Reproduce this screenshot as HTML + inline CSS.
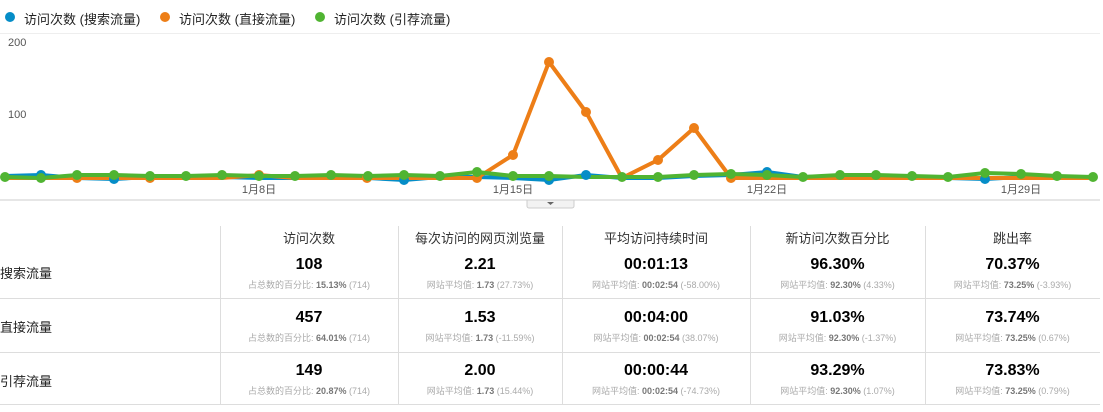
<!DOCTYPE html><html><head><meta charset="utf-8"><style>
body{margin:0;width:1103px;height:412px;background:#fff;font-family:"Liberation Sans","Noto Sans CJK SC",sans-serif;position:relative;overflow:hidden}
.a{position:absolute;white-space:nowrap}
.leg{top:9px;font-size:13px;color:#222}
.dot{position:absolute;width:10px;height:10px;border-radius:5px;top:12px}
.vl{position:absolute;top:226px;width:1px;height:178px;background:#ddd}
.hl{position:absolute;left:0;height:1px;background:#ddd;width:1100px}
.c{position:absolute;text-align:center}
.h{font-size:13px;color:#333;top:228px}
.v{font-size:16px;font-weight:bold;color:#000}
.s{font-size:9px;color:#aaa}
.s b{color:#777}
.rl{position:absolute;left:0;font-size:13px;color:#222}
</style></head><body>
<div class="dot" style="left:5px;background:#058dc7"></div><div class="a leg" style="left:24px">访问次数 (搜索流量)</div>
<div class="dot" style="left:160px;background:#ed7e17"></div><div class="a leg" style="left:179px">访问次数 (直接流量)</div>
<div class="dot" style="left:315px;background:#50b432"></div><div class="a leg" style="left:334px">访问次数 (引荐流量)</div>
<div style="position:absolute;left:0;top:33px;width:1100px;height:1px;background:#eee"></div>
<div class="a" style="left:8px;top:37px;font-size:11px;color:#555">200</div>
<div class="a" style="left:8px;top:109px;font-size:11px;color:#555">100</div>
<svg style="position:absolute;left:0;top:0" width="1103" height="215">
<line x1="0" y1="200" x2="1100" y2="200" stroke="#ccc"/>
<path d="M527 200h47v6a2 2 0 0 1-2 2h-43a2 2 0 0 1-2-2z" fill="#f2f2f2" stroke="#ccc"/>
<path d="M547 202h7l-3.5 3z" fill="#666"/>
<g font-size="11" fill="#555" text-anchor="middle" font-family="Liberation Sans,Noto Sans CJK SC,sans-serif">
<text x="259" y="193">1月8日</text><text x="513" y="193">1月15日</text><text x="767" y="193">1月22日</text><text x="1021" y="193">1月29日</text></g>
<g id="b" fill="none" stroke-width="4" stroke-linejoin="round">
<polyline stroke="#058dc7" points="5,176 41,175 77,178 114,179 150,177 186,178 222,177 259,178 295,178 331,178 368,178 404,180 440,177 477,177 513,178 549,180 586,175 622,178 658,178 694,176 731,175 767,172 803,177 840,176 876,177 912,178 948,178 985,179 1021,177 1057,178 1093,178"/>
<polyline stroke="#ed7e17" points="5,178 41,178 77,178 114,178 150,178 186,178 222,178 259,175 295,178 331,178 368,178 404,178 440,178 477,178 513,155 549,62 586,112 622,178 658,160 694,128 731,178 767,178 803,178 840,178 876,178 912,178 948,178 985,178 1021,178 1057,178 1093,178"/>
<polyline stroke="#50b432" points="5,177 41,178 77,175 114,175 150,176 186,176 222,175 259,176 295,176 331,175 368,176 404,175 440,176 477,172 513,176 549,176 586,177 622,177 658,177 694,175 731,174 767,175 803,177 840,175 876,175 912,176 948,177 985,173 1021,174 1057,176 1093,177"/>
</g>
<g fill="#058dc7"><circle cx="41" cy="175" r="5"/><circle cx="114" cy="179" r="5"/><circle cx="404" cy="180" r="5"/><circle cx="549" cy="180" r="5"/><circle cx="586" cy="175" r="5"/><circle cx="767" cy="172" r="5"/><circle cx="985" cy="179" r="5"/></g>
<g fill="#ed7e17"><circle cx="259" cy="175" r="5"/><circle cx="477" cy="178" r="5"/><circle cx="513" cy="155" r="5"/><circle cx="549" cy="62" r="5"/><circle cx="586" cy="112" r="5"/><circle cx="658" cy="160" r="5"/><circle cx="694" cy="128" r="5"/><circle cx="731" cy="178" r="5"/><circle cx="77" cy="178" r="5"/><circle cx="150" cy="178" r="5"/><circle cx="367" cy="178" r="5"/></g>
<g fill="#50b432"><circle cx="5" cy="177" r="5"/><circle cx="41" cy="178" r="5"/><circle cx="77" cy="175" r="5"/><circle cx="114" cy="175" r="5"/><circle cx="150" cy="176" r="5"/><circle cx="186" cy="176" r="5"/><circle cx="222" cy="175" r="5"/><circle cx="259" cy="176" r="5"/><circle cx="295" cy="176" r="5"/><circle cx="331" cy="175" r="5"/><circle cx="368" cy="176" r="5"/><circle cx="404" cy="175" r="5"/><circle cx="440" cy="176" r="5"/><circle cx="477" cy="172" r="5"/><circle cx="513" cy="176" r="5"/><circle cx="549" cy="176" r="5"/><circle cx="622" cy="177" r="5"/><circle cx="658" cy="177" r="5"/><circle cx="694" cy="175" r="5"/><circle cx="731" cy="174" r="5"/><circle cx="767" cy="175" r="5"/><circle cx="803" cy="177" r="5"/><circle cx="840" cy="175" r="5"/><circle cx="876" cy="175" r="5"/><circle cx="912" cy="176" r="5"/><circle cx="948" cy="177" r="5"/><circle cx="985" cy="173" r="5"/><circle cx="1021" cy="174" r="5"/><circle cx="1057" cy="176" r="5"/><circle cx="1093" cy="177" r="5"/></g>
</svg>
<div class="vl" style="left:220px"></div><div class="vl" style="left:398px"></div><div class="vl" style="left:562px"></div><div class="vl" style="left:750px"></div><div class="vl" style="left:925px"></div>
<div class="hl" style="top:298px"></div><div class="hl" style="top:352px"></div><div class="hl" style="top:404px"></div>
<div class="rl" style="top:263px">搜索流量</div><div class="rl" style="top:317px">直接流量</div><div class="rl" style="top:371px">引荐流量</div>
<div class="c h" style="left:220px;width:178px">访问次数</div>
<div class="c h" style="left:398px;width:164px">每次访问的网页浏览量</div>
<div class="c h" style="left:562px;width:188px">平均访问持续时间</div>
<div class="c h" style="left:750px;width:175px">新访问次数百分比</div>
<div class="c h" style="left:925px;width:175px">跳出率</div>
<!-- rows -->
<div class="c v" style="left:220px;width:178px;top:256px">108</div><div class="c s" style="left:220px;width:178px;top:278px">占总数的百分比: <b>15.13%</b> (714)</div>
<div class="c v" style="left:398px;width:164px;top:256px">2.21</div><div class="c s" style="left:398px;width:164px;top:278px">网站平均值: <b>1.73</b> (27.73%)</div>
<div class="c v" style="left:562px;width:188px;top:256px">00:01:13</div><div class="c s" style="left:562px;width:188px;top:278px">网站平均值: <b>00:02:54</b> (-58.00%)</div>
<div class="c v" style="left:750px;width:175px;top:256px">96.30%</div><div class="c s" style="left:750px;width:175px;top:278px">网站平均值: <b>92.30%</b> (4.33%)</div>
<div class="c v" style="left:925px;width:175px;top:256px">70.37%</div><div class="c s" style="left:925px;width:175px;top:278px">网站平均值: <b>73.25%</b> (-3.93%)</div>

<div class="c v" style="left:220px;width:178px;top:309px">457</div><div class="c s" style="left:220px;width:178px;top:331px">占总数的百分比: <b>64.01%</b> (714)</div>
<div class="c v" style="left:398px;width:164px;top:309px">1.53</div><div class="c s" style="left:398px;width:164px;top:331px">网站平均值: <b>1.73</b> (-11.59%)</div>
<div class="c v" style="left:562px;width:188px;top:309px">00:04:00</div><div class="c s" style="left:562px;width:188px;top:331px">网站平均值: <b>00:02:54</b> (38.07%)</div>
<div class="c v" style="left:750px;width:175px;top:309px">91.03%</div><div class="c s" style="left:750px;width:175px;top:331px">网站平均值: <b>92.30%</b> (-1.37%)</div>
<div class="c v" style="left:925px;width:175px;top:309px">73.74%</div><div class="c s" style="left:925px;width:175px;top:331px">网站平均值: <b>73.25%</b> (0.67%)</div>

<div class="c v" style="left:220px;width:178px;top:362px">149</div><div class="c s" style="left:220px;width:178px;top:384px">占总数的百分比: <b>20.87%</b> (714)</div>
<div class="c v" style="left:398px;width:164px;top:362px">2.00</div><div class="c s" style="left:398px;width:164px;top:384px">网站平均值: <b>1.73</b> (15.44%)</div>
<div class="c v" style="left:562px;width:188px;top:362px">00:00:44</div><div class="c s" style="left:562px;width:188px;top:384px">网站平均值: <b>00:02:54</b> (-74.73%)</div>
<div class="c v" style="left:750px;width:175px;top:362px">93.29%</div><div class="c s" style="left:750px;width:175px;top:384px">网站平均值: <b>92.30%</b> (1.07%)</div>
<div class="c v" style="left:925px;width:175px;top:362px">73.83%</div><div class="c s" style="left:925px;width:175px;top:384px">网站平均值: <b>73.25%</b> (0.79%)</div>
</body></html>
